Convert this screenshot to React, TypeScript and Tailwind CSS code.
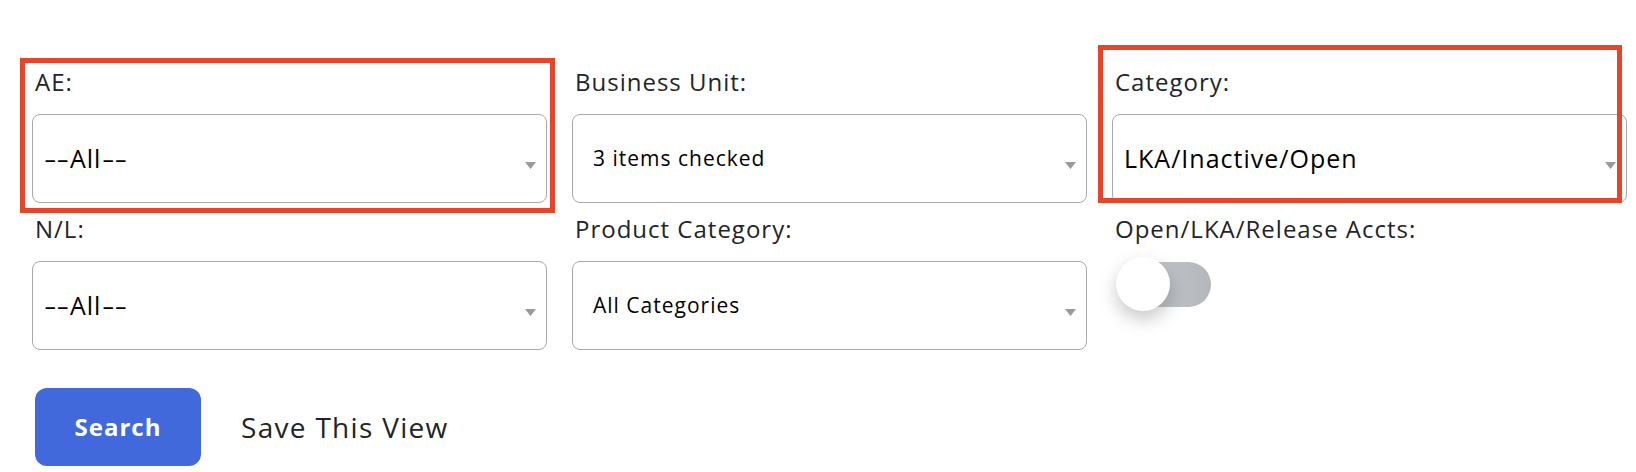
import React from 'react';

const font = { fontFamily: '"Open Sans", "Liberation Sans", sans-serif' };

function Arrow() {
  return (
    <svg width="11" height="7" viewBox="0 0 11 7" className="shrink-0 mt-[14px]">
      <polygon points="0,0 11,0 5.5,7" fill="#9a9a9a" />
    </svg>
  );
}

function Label({ children, mb }: { children: React.ReactNode; mb: string }) {
  return (
    <div className={`h-[34px] leading-[34px] text-[24px] tracking-[1px] text-[#212529] pl-[3px] ${mb}`}>
      {children}
    </div>
  );
}

// the hyphens of the reference font are long, so stretch them a bit
function AllValue() {
  return (
    <>
      <span className="inline-block w-[26px] origin-left scale-x-[1.55] tracking-[0px]">--</span>
      All
      <span className="inline-block w-[26px] ml-[1px] origin-left scale-x-[1.55] tracking-[0px]">--</span>
    </>
  );
}

function Field({ label, value, small }: { label: string; value: React.ReactNode; small?: boolean }) {
  return (
    <div>
      <Label mb="mb-[15px]">{label}</Label>
      <div className="h-[89px] rounded-[8px] border border-[#a8a8a8] bg-white flex items-center justify-between pr-[10px]">
        {small ? (
          <span className="pl-[20px] text-[21px] tracking-[1px] text-black">{value}</span>
        ) : (
          <span className="pl-[11px] text-[25px] tracking-[1px] text-black">{value}</span>
        )}
        <Arrow />
      </div>
    </div>
  );
}

export default function App() {
  return (
    <div className="relative w-[1636px] h-[472px] bg-white overflow-hidden" style={font}>
      <div className="pt-[65px] pl-[32px]">
        <div className="grid grid-cols-[515px_515px_515px] gap-x-[25px] gap-y-[9px]">
          <Field label="AE:" value={<AllValue />} />
          <Field label="Business Unit:" value="3 items checked" small />
          <Field label="Category:" value="LKA/Inactive/Open" />
          <Field label="N/L:" value={<AllValue />} />
          <Field label="Product Category:" value="All Categories" small />
          <div>
            <Label mb="mb-[11px]">Open/LKA/Release Accts:</Label>
            <div className="relative ml-[4px] w-[95px] h-[54px] flex items-center">
              <div className="ml-[4px] w-[91px] h-[45px] rounded-full bg-gradient-to-r from-[#c9ccd0] to-[#b3b7bc]" />
              <div className="absolute left-0 top-0 w-[54px] h-[54px] rounded-full bg-white shadow-[0_8px_18px_rgba(0,0,0,0.22)]" />
            </div>
          </div>
        </div>
        <div className="flex items-center mt-[38px] pl-[3px] gap-[40px]">
          <button className="w-[166px] h-[78px] rounded-[12px] bg-[#4169dc] text-white text-[24px] tracking-[1px] font-bold">
            Search
          </button>
          <span className="text-[28px] tracking-[1.3px] text-[#212529]">Save This View</span>
        </div>
      </div>

      {/* annotation boxes */}
      <div className="absolute left-[20px] top-[58px] w-[535px] h-[155px] border-[5px] border-[#e8442b] pointer-events-none" />
      <div className="absolute left-[1098px] top-[45px] w-[524px] h-[158px] border-[5px] border-[#e8442b] pointer-events-none" />
    </div>
  );
}
